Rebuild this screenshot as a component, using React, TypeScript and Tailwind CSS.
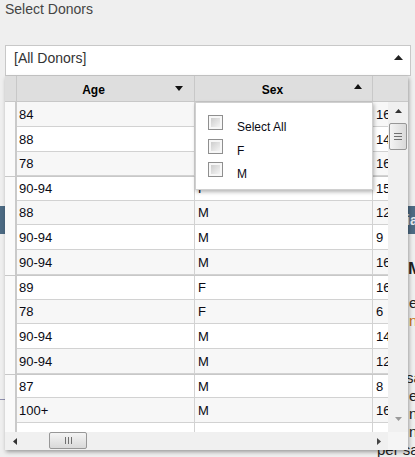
import React from "react";

const ages = ["84", "88", "78", "90-94", "88", "90-94", "90-94", "89", "78", "90-94", "90-94", "87", "100+"];
const sexes = ["M", "F", "M", "F", "M", "M", "M", "F", "F", "M", "M", "M", "M"];
const thirds = ["16", "14", "16", "15", "12", "9", "16", "16", "6", "14", "12", "8", "16"];
const heights = [25, 25, 24, 25, 24, 25, 25, 25, 24, 25, 25, 24, 25];

function Checkbox() {
  return (
    <div className="h-[15px] w-[15px] shrink-0 border border-[#8f8f8f] bg-[#f7f7f7] p-[2px]">
      <div className="h-full w-full bg-linear-to-br from-[#cdcdcd] to-[#f5f5f5]" />
    </div>
  );
}

function Header() {
  return (
    <div className="flex h-[26px] shrink-0 border-b border-[#c8c8c8] bg-[#dedede] text-[12px] font-bold text-black">
      <div className="w-[12px] shrink-0 border-r border-[#c8c8c8]" />
      <div className="flex w-[178px] shrink-0 items-center border-r border-[#c8c8c8]">
        <span className="flex-1 pt-[2px] text-center">Age</span>
        <span className="flex w-[24px] pl-[5px]">
          <svg width="8" height="5" viewBox="0 0 8 5">
            <polygon points="0,0 8,0 4,5" fill="#111" />
          </svg>
        </span>
      </div>
      <div className="flex w-[178px] shrink-0 items-center border-r border-[#c8c8c8]">
        <span className="flex-1 pt-[2px] text-center">Sex</span>
        <span className="flex w-[22px] pb-[5px] pl-[4px]">
          <svg width="8" height="5" viewBox="0 0 8 5">
            <polygon points="0,5 4,0 8,5" fill="#111" />
          </svg>
        </span>
      </div>
      <div className="w-[35px] shrink-0" />
    </div>
  );
}

function Rows() {
  return (
    <div className="w-[383px] shrink-0 overflow-hidden">
      {ages.map((a, i) => {
        const thick = i === 3 || i === 7 || i === 11;
        return (
          <div
            key={i}
            className={`flex ${heights[i] === 25 ? "h-[25px]" : "h-[24px]"} ${thick ? "border-t border-[#c8c8c8]" : ""} ${
              i % 2 === 0 ? "bg-[#f7f7f7]" : "bg-white"
            } text-[13px] text-[#0a0a14]`}
          >
            <div className="w-[12px] shrink-0 border-r-2 border-[#cacaca] bg-[#fafafa]" />
            <div className="flex w-[178px] shrink-0 items-center border-r border-b border-[#d2d2d2] pl-[2px] pt-[1px]">{a}</div>
            <div className="flex w-[178px] shrink-0 items-center border-r border-b border-[#d2d2d2] pl-[3px] pt-[1px]">{sexes[i]}</div>
            <div className="flex w-[15px] shrink-0 items-center overflow-hidden border-b border-[#d2d2d2] pl-[3px] pt-[1px]">{thirds[i]}</div>
          </div>
        );
      })}
      <div className="flex h-[25px] bg-white">
        <div className="w-[12px] shrink-0 border-r-2 border-[#cacaca] bg-[#fafafa]" />
        <div className="w-[178px] shrink-0 border-r border-[#d2d2d2]" />
        <div className="w-[178px] shrink-0 border-r border-[#d2d2d2]" />
        <div className="w-[15px] shrink-0" />
      </div>
    </div>
  );
}

function VScroll() {
  return (
    <div className="flex w-[20px] shrink-0 flex-col items-center bg-[#f0f0f0]">
      <svg className="mt-[7px]" width="7" height="4" viewBox="0 0 7 4">
        <polygon points="0,4 3.5,0 7,4" fill="#333" />
      </svg>
      <div className="mt-[10px] flex h-[27px] w-[18px] flex-col items-center justify-center gap-[2px] rounded-[2px] border border-[#979797] bg-linear-to-r from-[#f4f4f4] to-[#d9d9d9]">
        <div className="h-px w-[8px] bg-[#707070]" />
        <div className="h-px w-[8px] bg-[#707070]" />
        <div className="h-px w-[8px] bg-[#707070]" />
      </div>
      <svg className="mb-[11px] mt-auto" width="7" height="4" viewBox="0 0 7 4">
        <polygon points="0,0 7,0 3.5,4" fill="#9a9a9a" />
      </svg>
    </div>
  );
}

function HScroll() {
  return (
    <div className="flex h-[18px] shrink-0">
      <div className="flex w-[383px] shrink-0 items-center bg-[#f0f0f0]">
        <svg className="ml-[8px]" width="4" height="7" viewBox="0 0 4 7">
          <polygon points="4,0 0,3.5 4,7" fill="#333" />
        </svg>
        <div className="ml-[32px] flex h-[17px] w-[38px] self-start items-center justify-center gap-[2px] rounded-[2px] border border-[#979797] bg-linear-to-b from-[#f4f4f4] to-[#d9d9d9]">
          <div className="h-[7px] w-px bg-[#707070]" />
          <div className="h-[7px] w-px bg-[#707070]" />
          <div className="h-[7px] w-px bg-[#707070]" />
        </div>
        <svg className="ml-auto mr-[7px]" width="4" height="7" viewBox="0 0 4 7">
          <polygon points="0,0 4,3.5 0,7" fill="#444" />
        </svg>
      </div>
      <div className="w-[20px] shrink-0 bg-[#f5f5f5]" />
    </div>
  );
}

function Popup() {
  const items = ["Select All", "F", "M"];
  return (
    <div className="absolute left-[190px] top-[26px] z-20 h-[88px] w-[178px] border border-[#d0d0d0] bg-white pl-[12px] pt-[12px] text-[12px] text-[#0a0a14] shadow-[1px_2px_4px_rgba(0,0,0,0.3)]">
      {items.map((t, i) => (
        <div key={t} className={`flex items-start ${i === 0 ? "h-[24px]" : "h-[23px]"}`}>
          <Checkbox />
          <span className="ml-[14px] mt-[5px] leading-[14px]">{t}</span>
        </div>
      ))}
    </div>
  );
}

function Panel() {
  return (
    <div className="absolute left-0 top-[31px] z-10 flex h-[374px] w-[403px] flex-col bg-white shadow-[1px_2px_4px_rgba(0,0,0,0.35)]">
      <Header />
      <div className="flex h-[330px] shrink-0">
        <Rows />
        <VScroll />
      </div>
      <HScroll />
      <Popup />
    </div>
  );
}

export default function App() {
  return (
    <div className="relative h-[457px] w-[415px] overflow-hidden bg-[#efefef] font-['Liberation_Sans',Arial,sans-serif] text-[#111]">
      <div className="px-[5px] pt-[1px]">
        <div className="text-[14px] leading-[17px] text-[#444]">Select Donors</div>
        <div className="relative mt-[27px]">
          <div className="flex h-[31px] w-[406px] items-start border border-[#c8c8c8] bg-white">
            <span className="pl-[8px] pt-[4px] text-[14px] leading-[17px] text-[#333]">[All Donors]</span>
            <svg className="ml-auto mr-[7px] mt-[9px]" width="9" height="5" viewBox="0 0 9 5">
              <polygon points="0,5 4.5,0 9,5" fill="#222" />
            </svg>
          </div>
          <Panel />
        </div>
      </div>
      <div className="mt-[130px] h-[28px] whitespace-nowrap bg-[#4d6b84] pl-[406px] text-[14px] font-bold leading-[28px] text-[#e6ecf1]">
        ial
      </div>
      <div className="flex">
        <div className="w-[377px] shrink-0">
          <div className="mt-[165px] h-px bg-[#8f8fae]" />
        </div>
        <div className="whitespace-nowrap text-[15px] leading-[18px] text-[#222]">
          <div className="mt-[25px] text-[17px] font-bold leading-[20px]">
            <span className="inline-block w-[31px]" />
            Methods
          </div>
          <div className="mt-[15px]">
            <span className="inline-block w-[32px]" />
            experiment
          </div>
          <div>
            <span className="inline-block w-[32px]" />
            <span className="text-[#c8741e]">neuron</span>
          </div>
          <div className="mt-[39px]">
            <span className="inline-block w-[29px]" />
            sample
          </div>
          <div>
            <span className="inline-block w-[32px]" />
            each
          </div>
          <div>
            <span className="inline-block w-[32px]" />
            nine
          </div>
          <div>
            <span className="inline-block w-[32px]" />
            need
          </div>
          <div>per sample</div>
        </div>
      </div>
    </div>
  );
}
